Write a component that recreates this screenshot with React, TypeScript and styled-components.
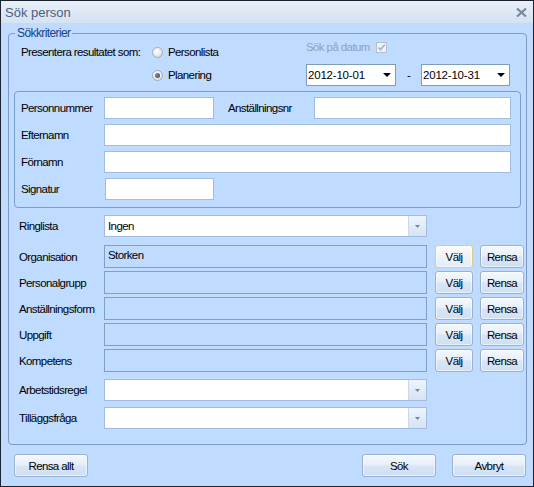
import React from 'react';
import styled, { createGlobalStyle, css } from 'styled-components';

const FONT = `"Liberation Sans", Arial, sans-serif`;
const SIZE = '11.5px';
const TRACK = '-0.6px';

const GlobalStyle = createGlobalStyle`
  html, body { margin: 0; padding: 0; background: #ffffff; }
  * { box-sizing: border-box; }
`;

const Window = styled.div`
  width: 534px;
  height: 487px;
  border: 1px solid #1b2331;
  background: #bfdbff;
  display: flex;
  flex-direction: column;
  font-family: ${FONT};
  font-size: ${SIZE};
  letter-spacing: ${TRACK};
  color: #000;
`;

const TitleBar = styled.div`
  flex: none;
  height: 22px;
  display: flex;
  align-items: center;
  justify-content: space-between;
  padding: 0 6px 0 4px;
  background: linear-gradient(#e8eff8, #d5e2f2);
`;

const Title = styled.span`
  font-size: 13px;
  letter-spacing: 0;
  color: #4a5f80;
`;

const Body = styled.div`
  flex: 1;
  display: flex;
  flex-direction: column;
  padding-top: 3px;
`;

const Group = styled.fieldset`
  margin: 0 6px 0 7px;
  padding: 1px 1px 15px 5px;
  border: 1px solid #7c9bc8;
  border-radius: 4px;
  min-inline-size: 0;
`;

const Legend = styled.legend`
  margin-left: 1px;
  padding: 0 2px;
  line-height: 14px;
  font-size: 12px;
  color: #15428b;
`;

const PresentGrid = styled.div`
  display: grid;
  grid-template-columns: 131px 154px 1fr;
  grid-template-rows: 22px 22px;
  row-gap: 1px;
  padding-left: 7px;
  align-items: center;
`;

const Label = styled.span`
  white-space: nowrap;
`;

const RadioOption = styled.label`
  display: flex;
  align-items: center;
  gap: 5px;
`;

const Radio = styled.span<{ $checked?: boolean }>`
  position: relative;
  flex: none;
  width: 11px;
  height: 11px;
  border-radius: 50%;
  border: 1px solid #a3abb6;
  background: radial-gradient(circle at 40% 35%, #ffffff 0%, #eceff2 45%, #c8ced6 100%);
  ${(p) =>
    p.$checked &&
    css`
      &::after {
        content: '';
        position: absolute;
        left: 2px;
        top: 2px;
        width: 5px;
        height: 5px;
        border-radius: 50%;
        background: radial-gradient(circle at 40% 40%, #8d8d8d, #3a3a3a);
      }
    `}
`;

const DateToggle = styled.label`
  align-self: start;
  display: flex;
  align-items: center;
  gap: 6px;
  color: #8fa1b8;
  line-height: 12px;
`;

const CheckBox = styled.span`
  width: 11px;
  height: 11px;
  border: 1px solid #b3bfcf;
  background: #eef2f7;
  display: flex;
  align-items: center;
  justify-content: center;
`;

const DateRange = styled.div`
  display: flex;
  align-items: center;
`;

const Dash = styled.span`
  width: 25px;
  text-align: center;
`;

const DateBox = styled.div<{ $w: number }>`
  width: ${(p) => p.$w}px;
  height: 22px;
  background: #ffffff;
  border: 1px solid #7f9db9;
  display: flex;
  align-items: center;
  justify-content: space-between;
  padding: 0 4px 0 1px;
  letter-spacing: -0.2px;
`;

const PersonBox = styled.div`
  margin: 5px 4px 0 0;
  padding: 5px 9px 7px 6px;
  border: 1px solid #7c9bc8;
  border-radius: 4px;
`;

const PersonGrid = styled.div`
  display: grid;
  grid-template-columns: 83px 110px 14px 86px 1fr;
  grid-auto-rows: 22px;
  row-gap: 5px;
  align-items: center;
`;

const Cell = styled.div<{ $col?: string }>`
  grid-column: ${(p) => p.$col ?? 'auto'};
  display: flex;
  align-items: center;
  height: 100%;
`;

const TextInput = styled.input<{ $w?: number; $shift?: number }>`
  width: ${(p) => (p.$w ? `${p.$w}px` : '100%')};
  margin-left: ${(p) => p.$shift ?? 0}px;
  height: 22px;
  border: 1px solid #a2bce0;
  background: #ffffff;
  font-family: ${FONT};
  font-size: ${SIZE};
  letter-spacing: ${TRACK};
  padding: 0 3px;
  outline: none;
`;

const FilterList = styled.div`
  display: flex;
  flex-direction: column;
`;

const FilterRow = styled.div<{ $top: number; $h: number }>`
  margin-top: ${(p) => p.$top}px;
  height: ${(p) => p.$h}px;
  display: grid;
  grid-template-columns: 90px 323px 46px 51px;
  align-items: center;
`;

const FilterLabel = styled.span`
  padding-left: 5px;
  white-space: nowrap;
`;

const Combo = styled.div`
  height: 22px;
  display: flex;
  background: #ffffff;
  border: 1px solid #a2bce0;
`;

const ComboText = styled.span`
  flex: 1;
  display: flex;
  align-items: center;
  padding-left: 3px;
`;

const ComboButton = styled.span`
  width: 18px;
  display: flex;
  align-items: center;
  justify-content: center;
  border-left: 1px solid #c9d8ec;
  background: linear-gradient(#eef4fb, #d6e3f4);
`;

const ReadonlyField = styled.div`
  height: 23px;
  border: 1px solid #7f9fca;
  background: #bfdbff;
  padding: 2px 3px 0;
  line-height: 14px;
`;

const Button = styled.button<{ $w: number; $hot?: boolean }>`
  justify-self: end;
  width: ${(p) => p.$w}px;
  height: 23px;
  padding: 0;
  font-family: ${FONT};
  font-size: ${SIZE};
  letter-spacing: ${TRACK};
  color: #000;
  border: 1px solid #9cb1cd;
  border-radius: 3px;
  background: linear-gradient(#f5f9fe 0%, #e5eef9 48%, #d7e5f6 52%, #cfe0f5 100%);
  box-shadow: inset 0 0 0 1px rgba(255, 255, 255, 0.55);
  ${(p) =>
    p.$hot &&
    css`
      border-color: #d9cd90;
      background: linear-gradient(#fdfdf9 0%, #eef3fa 50%, #e3ecf8 100%);
    `}
`;

const Footer = styled.div`
  margin-top: 9px;
  display: flex;
  align-items: center;
  padding: 0 7px 0 13px;
  gap: 16px;
`;

const Spacer = styled.div`
  flex: 1;
`;

const CloseIcon = () => (
  <svg width="11" height="9" viewBox="0 0 11 9">
    <path d="M1 0.5 L10 8.5 M10 0.5 L1 8.5" stroke="#7d8898" strokeWidth="2.2" />
  </svg>
);

const BlackArrow = () => (
  <svg width="8" height="4" viewBox="0 0 8 4">
    <polygon points="0,0 8,0 4,4" fill="#000" />
  </svg>
);

const SmallArrow = () => (
  <svg width="5" height="3" viewBox="0 0 5 3">
    <polygon points="0,0 5,0 2.5,3" fill="#6b87ad" />
  </svg>
);

const Check = () => (
  <svg width="9" height="9" viewBox="0 0 9 9">
    <path d="M1.5 4.5 L3.5 6.8 L7.8 1.5" stroke="#a7b4c5" strokeWidth="1.6" fill="none" />
  </svg>
);

const pickers = [
  { label: 'Organisation', value: 'Storken', hot: true },
  { label: 'Personalgrupp', value: '' },
  { label: 'Anställningsform', value: '' },
  { label: 'Uppgift', value: '' },
  { label: 'Kompetens', value: '' },
];

export default function App() {
  return (
    <>
      <GlobalStyle />
      <Window>
        <TitleBar>
          <Title>Sök person</Title>
          <CloseIcon />
        </TitleBar>
        <Body>
          <Group>
            <Legend>Sökkriterier</Legend>
            <PresentGrid>
              <Label>Presentera resultatet som:</Label>
              <RadioOption>
                <Radio />
                Personlista
              </RadioOption>
              <DateToggle>
                Sök på datum
                <CheckBox>
                  <Check />
                </CheckBox>
              </DateToggle>
              <span />
              <RadioOption>
                <Radio $checked />
                Planering
              </RadioOption>
              <DateRange>
                <DateBox $w={90}>
                  2012-10-01
                  <BlackArrow />
                </DateBox>
                <Dash>-</Dash>
                <DateBox $w={89}>
                  2012-10-31
                  <BlackArrow />
                </DateBox>
              </DateRange>
            </PresentGrid>

            <PersonBox>
              <PersonGrid>
                <Label>Personnummer</Label>
                <Cell $col="2">
                  <TextInput readOnly value="" />
                </Cell>
                <Cell $col="4">
                  <Label>Anställningsnr</Label>
                </Cell>
                <Cell $col="5">
                  <TextInput readOnly value="" />
                </Cell>

                <Label>Efternamn</Label>
                <Cell $col="2 / -1">
                  <TextInput readOnly value="" />
                </Cell>

                <Label>Förnamn</Label>
                <Cell $col="2 / -1">
                  <TextInput readOnly value="" />
                </Cell>

                <Label>Signatur</Label>
                <Cell $col="2">
                  <TextInput readOnly value="" $w={109} $shift={1} />
                </Cell>
              </PersonGrid>
            </PersonBox>

            <FilterList>
              <FilterRow $top={7} $h={22}>
                <FilterLabel>Ringlista</FilterLabel>
                <Combo>
                  <ComboText>Ingen</ComboText>
                  <ComboButton>
                    <SmallArrow />
                  </ComboButton>
                </Combo>
              </FilterRow>

              {pickers.map((p, i) => (
                <FilterRow key={p.label} $top={i === 0 ? 8 : 3} $h={23}>
                  <FilterLabel>{p.label}</FilterLabel>
                  <ReadonlyField>{p.value}</ReadonlyField>
                  <Button $w={38} $hot={p.hot}>
                    Välj
                  </Button>
                  <Button $w={44}>Rensa</Button>
                </FilterRow>
              ))}

              <FilterRow $top={7} $h={22}>
                <FilterLabel>Arbetstidsregel</FilterLabel>
                <Combo>
                  <ComboText />
                  <ComboButton>
                    <SmallArrow />
                  </ComboButton>
                </Combo>
              </FilterRow>

              <FilterRow $top={6} $h={22}>
                <FilterLabel>Tilläggsfråga</FilterLabel>
                <Combo>
                  <ComboText />
                  <ComboButton>
                    <SmallArrow />
                  </ComboButton>
                </Combo>
              </FilterRow>
            </FilterList>
          </Group>

          <Footer>
            <Button $w={74}>Rensa allt</Button>
            <Spacer />
            <Button $w={74}>Sök</Button>
            <Button $w={74}>Avbryt</Button>
          </Footer>
        </Body>
      </Window>
    </>
  );
}
